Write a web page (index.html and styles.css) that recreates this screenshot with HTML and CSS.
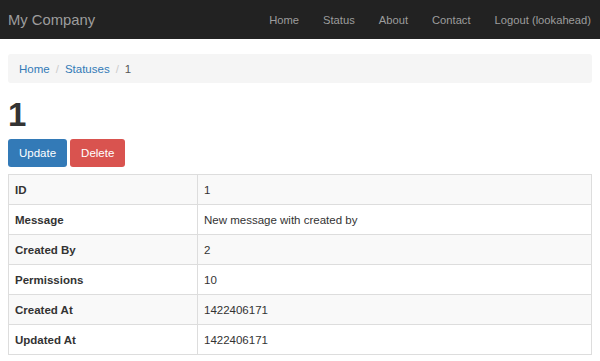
FILE: index.html
```html
<!DOCTYPE html>
<html lang="en">
  <head>
    <meta charset="UTF-8" />
    <meta name="viewport" content="width=device-width, initial-scale=1.0" />
    <title>Status 1</title>
    <link rel="stylesheet" href="styles.css">
  </head>
  <body>
    <nav class="navbar">
      <a class="brand" href="#">My Company</a>
      <ul class="nav">
        <li><a href="#">Home</a></li>
        <li><a href="#">Status</a></li>
        <li><a href="#">About</a></li>
        <li><a href="#">Contact</a></li>
        <li><a href="#">Logout (lookahead)</a></li>
      </ul>
    </nav>
    <div class="container">
      <ul class="breadcrumb">
        <li><a href="#">Home</a></li>
        <li><a href="#">Statuses</a></li>
        <li class="active">1</li>
      </ul>
      <h1>1</h1>
      <div class="actions">
        <a class="btn btn-primary" href="#">Update</a>
        <a class="btn btn-danger" href="#">Delete</a>
      </div>
      <table class="detail">
        <tr><th>ID</th><td>1</td></tr>
        <tr><th>Message</th><td>New message with created by</td></tr>
        <tr><th>Created By</th><td>2</td></tr>
        <tr><th>Permissions</th><td>10</td></tr>
        <tr><th>Created At</th><td>1422406171</td></tr>
        <tr><th>Updated At</th><td>1422406171</td></tr>
      </table>
    </div>
  </body>
</html>
```

FILE: styles.css
```css
body {
  margin: 0;
  font-family: "Liberation Sans", Arial, sans-serif;
  font-size: 11.5px;
  color: #333;
  background: white;
}
a {
  text-decoration: none;
}
.navbar {
  height: 39px;
  background: #222;
  display: flex;
  align-items: center;
  justify-content: space-between;
  padding: 0 9px 0 8px;
}
.brand {
  color: #9d9d9d;
  font-size: 14.8px;
}
.nav {
  list-style: none;
  margin: 0;
  padding: 0;
  display: flex;
  gap: 24px;
}
.nav a {
  color: #9d9d9d;
  font-size: 11.2px;
}
.container {
  padding: 0 8px;
}
.breadcrumb {
  list-style: none;
  margin: 15px 0 0;
  padding: 0 11px;
  height: 29px;
  display: flex;
  align-items: center;
  background: #f5f5f5;
  border-radius: 3px;
}
.breadcrumb li + li::before {
  content: "/";
  color: #ccc;
  padding: 0 6px;
}
.breadcrumb a {
  color: #337ab7;
}
.breadcrumb li.active {
  color: #555;
}
h1 {
  margin: 16px 0 8px;
  font-size: 33px;
  line-height: 32px;
  font-weight: bold;
}
.actions {
  display: flex;
  gap: 3px;
}
.btn {
  display: inline-block;
  height: 28px;
  line-height: 28px;
  padding: 0 11px;
  border-radius: 3px;
  color: white;
  font-size: 11.5px;
}
.btn-primary {
  background: #337ab7;
}
.btn-danger {
  background: #d9534f;
}
.detail {
  width: 100%;
  margin-top: 7px;
  border-collapse: collapse;
  border: 1px solid #ddd;
}
.detail th,
.detail td {
  border: 1px solid #ddd;
  height: 29px;
  padding: 0 6px;
  text-align: left;
}
.detail th {
  width: 176px;
  font-weight: bold;
}
.detail tr:nth-child(odd) {
  background: #f9f9f9;
}
```
